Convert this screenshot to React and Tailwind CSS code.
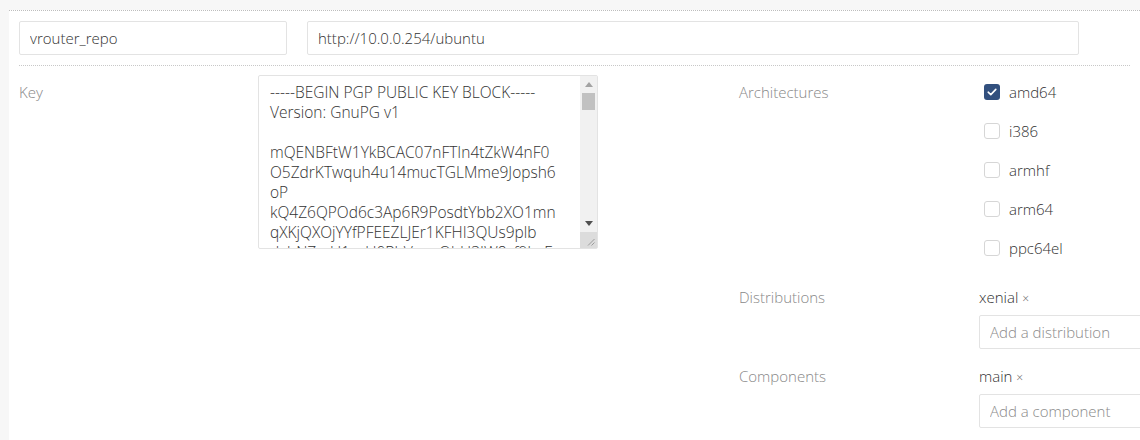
import { useState } from 'react'

const KEY_TEXT = `-----BEGIN PGP PUBLIC KEY BLOCK-----
Version: GnuPG v1

mQENBFtW1YkBCAC07nFTIn4tZkW4nF0
O5ZdrKTwquh4u14mucTGLMme9Jopsh6
oP
kQ4Z6QPOd6c3Ap6R9PosdtYbb2XO1mn
qXKjQXOjYYfPFEEZLJEr1KFHI3QUs9plb
dxbNZmU1avU0RbVqrwQhH3JW8vf9LnE
w2Xq7pLmR3sT8vNcKd0aYbZ1FgHjKl4
=Xy7P
-----END PGP PUBLIC KEY BLOCK-----`

const ARCHES = ['amd64', 'i386', 'armhf', 'arm64', 'ppc64el']

function Checkbox({ checked, label, onToggle }) {
  return (
    <button onClick={onToggle} className="flex items-center h-5 text-left">
      <span
        className={
          checked
            ? 'ml-[5px] w-4 h-4 rounded-[3px] bg-[#32507e] flex items-center justify-center'
            : 'ml-[5px] w-4 h-4 rounded-[3px] border border-[#d6d6d6] bg-white'
        }
      >
        {checked && (
          <svg width="10" height="8" viewBox="0 0 10 8" fill="none">
            <path d="M1.2 4.2 L3.8 6.6 L8.8 1.4" stroke="white" strokeWidth="1.6" strokeLinecap="round" strokeLinejoin="round" />
          </svg>
        )}
      </span>
      <span className="ml-[9px] text-[#333]">{label}</span>
    </button>
  )
}

function TagField({ tags, placeholder }) {
  return (
    <div>
      <div className="h-5 flex items-center text-[#333]">
        {tags.map((t) => (
          <span key={t}>
            {t} <span className="text-[12px] text-[#666]">×</span>
          </span>
        ))}
      </div>
      <input
        placeholder={placeholder}
        className="mt-[8px] w-[268px] h-[34px] px-[10px] border border-[#e3e3e3] rounded-[2px] outline-none placeholder:text-[#8a8a8a] text-[#333]"
      />
    </div>
  )
}

// drawn scrollbar, the headless browser hides the native one
function FakeScrollbar() {
  return (
    <div className="absolute top-px right-px bottom-px w-[17px] bg-[#f1f1f1] flex flex-col pointer-events-none">
      <div className="h-[17px] flex items-center justify-center">
        <svg width="8" height="5" viewBox="0 0 8 5">
          <path d="M4 0 L8 5 L0 5 Z" fill="#a3a3a3" />
        </svg>
      </div>
      <div className="flex-1 px-[2px]">
        <div className="h-[17px] bg-[#c1c1c1]" />
      </div>
      <div className="h-[17px] flex items-center justify-center">
        <svg width="8" height="5" viewBox="0 0 8 5">
          <path d="M0 0 L8 0 L4 5 Z" fill="#505050" />
        </svg>
      </div>
      <div className="h-[16px] bg-[#dcdcdc] flex items-end justify-end p-[2px]">
        <svg width="8" height="8" viewBox="0 0 8 8">
          <path d="M7.5 1 L1 7.5 M7.5 4.5 L4.5 7.5" stroke="#8a8a8a" strokeWidth="0.8" />
        </svg>
      </div>
    </div>
  )
}

export default function App() {
  const [arch, setArch] = useState({ amd64: true })
  const [name, setName] = useState('vrouter_repo')
  const [url, setUrl] = useState('http://10.0.0.254/ubuntu')

  return (
    <div
      className="w-[1140px] h-[440px] overflow-hidden bg-[#f7f7f7] pl-[9px] pt-[10px] text-[15px] font-light text-[#333]"
      style={{ fontFamily: '"Open Sans", "Noto Sans", sans-serif' }}
    >
      <div className="bg-white border-t border-dotted border-[#bdbdbd] h-full px-[10px]">
        <div className="flex gap-5 pt-[10px] pb-[10px] border-b border-dotted border-[#c8c8c8]">
          <input
            value={name}
            onChange={(e) => setName(e.target.value)}
            className="w-[268px] h-[34px] px-[10px] border border-[#e3e3e3] rounded-[2px] outline-none text-[#333]"
          />
          <input
            value={url}
            onChange={(e) => setUrl(e.target.value)}
            className="w-[772px] h-[34px] px-[10px] border border-[#e3e3e3] rounded-[2px] outline-none text-[#333]"
          />
        </div>

        <div className="flex pt-[9px]">
          <div className="w-[720px] flex shrink-0">
            <div className="w-[239px] shrink-0 pt-[6px] text-[#888888]">Key</div>
            <div className="relative w-[340px] h-[174px]">
              <textarea
                defaultValue={KEY_TEXT}
                className="w-full h-full resize-none overflow-y-scroll [scrollbar-width:none] border border-[#e3e3e3] rounded-[2px] pl-[11px] pr-[20px] pt-[6px] pb-[6px] leading-5 text-[15.5px] text-[#333] outline-none"
              />
              <FakeScrollbar />
            </div>
          </div>

          <div className="flex-1 shrink-0">
            <div className="flex pt-[7px]">
              <div className="w-[240px] shrink-0 text-[#888] h-5 flex items-center">Architectures</div>
              <div className="flex flex-col gap-[19px]">
                {ARCHES.map((a) => (
                  <Checkbox
                    key={a}
                    label={a}
                    checked={!!arch[a]}
                    onToggle={() => setArch({ ...arch, [a]: !arch[a] })}
                  />
                ))}
              </div>
            </div>

            <div className="flex mt-[29px]">
              <div className="w-[240px] shrink-0 h-5 flex items-center text-[#888]">Distributions</div>
              <TagField tags={['xenial']} placeholder="Add a distribution" />
            </div>

            <div className="flex mt-[17px]">
              <div className="w-[240px] shrink-0 h-5 flex items-center text-[#888]">Components</div>
              <TagField tags={['main']} placeholder="Add a component" />
            </div>
          </div>
        </div>
      </div>
    </div>
  )
}
